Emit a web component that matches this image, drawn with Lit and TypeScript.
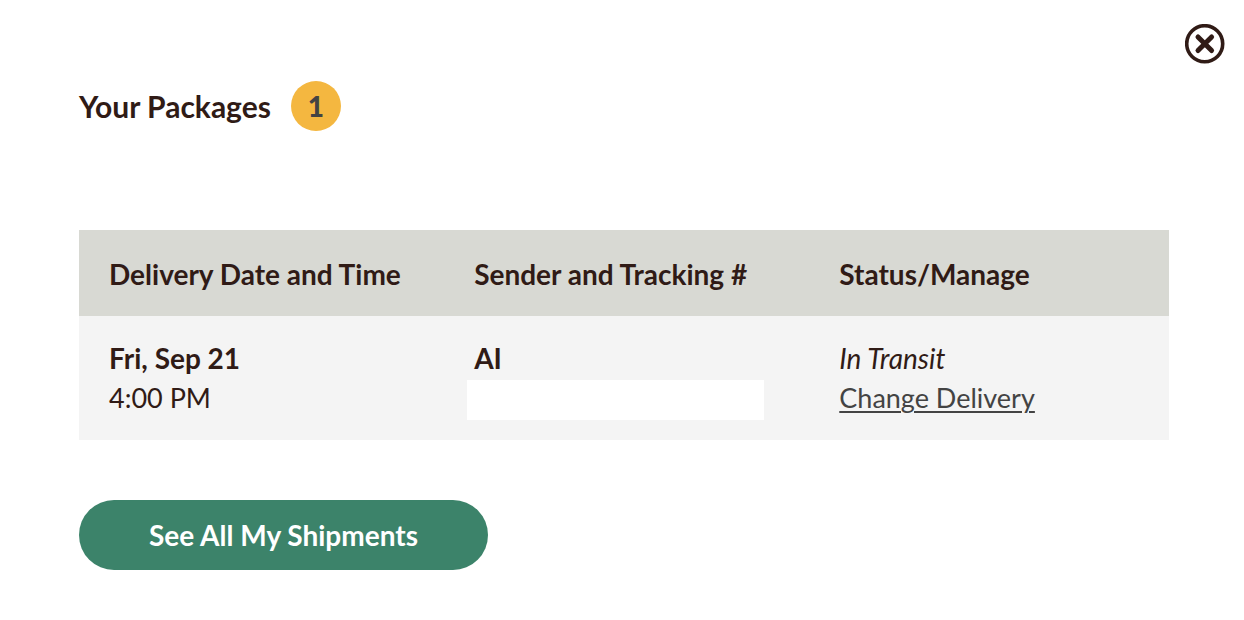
import { LitElement, html, css } from "lit";
import { customElement, state } from "lit/decorators.js";

interface Shipment {
  date: string;
  time: string;
  sender: string;
  tracking: string;
  status: string;
}

@customElement("app-root")
export class AppRoot extends LitElement {
  static styles = css`
    :host {
      display: block;
      box-sizing: border-box;
      padding: 24px 19px 50px 79px;
      background: #fff;
      color: #301b16;
      font: 28px/40px Lato, "Open Sans", sans-serif;
    }
    .top {
      display: flex;
      justify-content: flex-end;
    }
    .close {
      display: block;
      width: 40px;
      height: 40px;
      padding: 0;
      border: 0;
      background: none;
      color: inherit;
      cursor: pointer;
    }
    .close svg {
      display: block;
    }
    .body {
      padding: 17px 56px 0 0;
    }
    .heading {
      display: flex;
      align-items: center;
      gap: 20px;
      margin-bottom: 99px;
    }
    h1 {
      margin: 0;
      font-size: 30px;
      font-weight: 700;
    }
    .badge {
      display: grid;
      place-items: center;
      width: 50px;
      height: 50px;
      border-radius: 50%;
      background: #f4b740;
      color: #434343;
      font-weight: 900;
    }
    table {
      width: 100%;
      table-layout: fixed;
      border-collapse: collapse;
      text-align: left;
    }
    th,
    td {
      box-sizing: border-box;
      vertical-align: top;
      padding: 22px 0 20px 30px;
    }
    th {
      padding: 24px 0 22px 30px;
      background: #d8d9d3;
      font-weight: 700;
      white-space: nowrap;
    }
    .wide {
      width: 33.5%;
    }
    td {
      background: #f4f4f4;
      font-size: 27px;
    }
    .strong,
    .status {
      display: block;
      font-size: 28px;
    }
    .strong {
      font-weight: 700;
    }
    .status {
      font-style: italic;
    }
    .blank {
      display: block;
      max-width: 297px;
      height: 40px;
      margin: 2px 0 0 -7px;
      background: #fff;
    }
    a {
      color: #434343;
      text-decoration-thickness: 2px;
      text-underline-offset: 3px;
    }
    .all {
      display: block;
      margin-top: 60px;
      padding: 15px 70px;
      border: 0;
      border-radius: 35px;
      background: #3c836a;
      color: #fff;
      font: inherit;
      font-weight: 700;
      cursor: pointer;
    }
  `;

  @state() private shipments: Shipment[] = [
    { date: "Fri, Sep 21", time: "4:00 PM", sender: "AI", tracking: "", status: "In Transit" },
  ];

  render() {
    return html`
      <div class="top">
        <button class="close" aria-label="Close">
          <svg width="40" height="40" viewBox="0 0 40 40" fill="none" stroke="currentColor">
            <circle cx="19.7" cy="19.7" r="18" stroke-width="3.6" />
            <path d="M13 13 26.6 26.6M26.6 13 13 26.6" stroke-width="5" stroke-linecap="round" />
          </svg>
        </button>
      </div>
      <main class="body">
        <header class="heading">
          <h1>Your Packages</h1>
          <span class="badge">${this.shipments.length}</span>
        </header>
        <table>
          <thead>
            <tr>
              <th scope="col" class="wide">Delivery Date and Time</th>
              <th scope="col" class="wide">Sender and Tracking #</th>
              <th scope="col">Status/Manage</th>
            </tr>
          </thead>
          <tbody>
            ${this.shipments.map(
              (s) => html`<tr>
                <td><span class="strong">${s.date}</span>${s.time}</td>
                <td><span class="strong">${s.sender}</span><span class="blank">${s.tracking}</span></td>
                <td><span class="status">${s.status}</span><a href="#change">Change Delivery</a></td>
              </tr>`
            )}
          </tbody>
        </table>
        <button class="all">See All My Shipments</button>
      </main>
    `;
  }
}
